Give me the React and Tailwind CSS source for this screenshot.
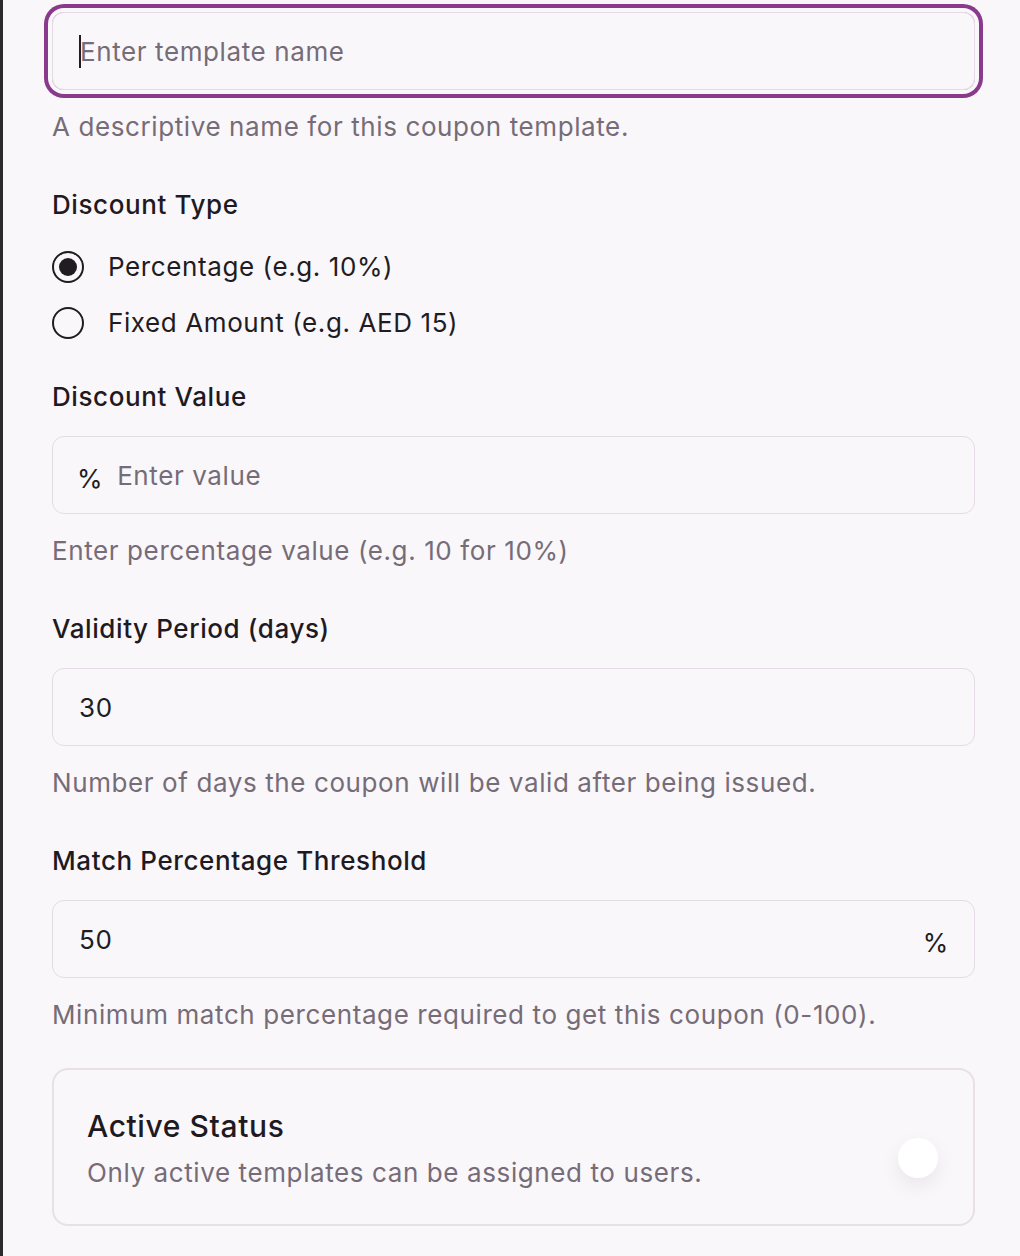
import React from "react";

const font = { fontFamily: "Inter, 'Noto Sans', sans-serif" };

const Helper = ({ children, className = "" }) => (
  <p className={`text-[26px] leading-[36px] text-[#766c78] ${className}`}>{children}</p>
);

const Label = ({ children, className = "" }) => (
  <p className={`text-[26px] leading-[36px] font-medium text-[#1f1a21] ${className}`}>{children}</p>
);

const Radio = ({ checked, label }) => (
  <div className="flex items-center h-[36px]">
    <span className="w-[32px] h-[32px] rounded-full border-2 border-[#211c22] flex items-center justify-center">
      {checked && <span className="w-[18px] h-[18px] rounded-full bg-[#211c22]" />}
    </span>
    <span className="ml-[24px] text-[26px] leading-[36px] text-[#211c22]">{label}</span>
  </div>
);

export default function App() {
  return (
    <div className="flex min-h-[1256px] bg-[#f9f7fa] tracking-[0.6px]" style={font}>
      {/* dark edge of the sidebar */}
      <div className="w-[3px] bg-[#2b2a2d] shrink-0" />

      <div className="flex-1 pl-[49px] pr-[45px] pt-[12px] pb-[30px]">
        {/* Template name (focused) */}
        <div className="h-[78px] rounded-[12px] border border-[#e5dbe6] ring-4 ring-[#8a3a8c] ring-offset-4 ring-offset-[#f9f7fa] flex items-center px-[26px]">
          <span className="w-[2px] h-[33px] bg-[#211c22] -mr-[1px]" />
          <span className="text-[26px] text-[#766c78]">Enter template name</span>
        </div>
        <Helper className="mt-[19px]">A descriptive name for this coupon template.</Helper>

        {/* Discount type */}
        <Label className="mt-[42px]">Discount Type</Label>
        <div className="mt-[26px] flex flex-col gap-[20px]">
          <Radio checked label="Percentage (e.g. 10%)" />
          <Radio label="Fixed Amount (e.g. AED 15)" />
        </div>

        {/* Discount value */}
        <Label className="mt-[38px]">Discount Value</Label>
        <div className="mt-[21px] h-[78px] rounded-[12px] border border-[#e5dbe6] flex items-center px-[24px]">
          <span className="text-[26px] text-[#211c22] mt-[6px]">%</span>
          <span className="ml-[14px] text-[26px] text-[#766c78]">Enter value</span>
        </div>
        <Helper className="mt-[19px]">Enter percentage value (e.g. 10 for 10%)</Helper>

        {/* Validity */}
        <Label className="mt-[42px]">Validity Period (days)</Label>
        <div className="mt-[21px] h-[78px] rounded-[12px] border border-[#e5dbe6] flex items-center px-[26px]">
          <span className="text-[26px] text-[#211c22]">30</span>
        </div>
        <Helper className="mt-[19px]">Number of days the coupon will be valid after being issued.</Helper>

        {/* Match threshold */}
        <Label className="mt-[42px]">Match Percentage Threshold</Label>
        <div className="mt-[21px] h-[78px] rounded-[12px] border border-[#e5dbe6] flex items-center justify-between pl-[26px] pr-[25px]">
          <span className="text-[26px] text-[#211c22]">50</span>
          <span className="text-[26px] text-[#211c22] mt-[6px]">%</span>
        </div>
        <Helper className="mt-[19px]">Minimum match percentage required to get this coupon (0-100).</Helper>

        {/* Active status */}
        <div className="mt-[35px] rounded-[16px] border-2 border-[#e8dfe8] flex items-center justify-between pl-[33px] pr-[35px] pt-[36px] pb-[33px]">
          <div>
            <p className="text-[30px] leading-[40px] font-medium text-[#1f1a21]">Active Status</p>
            <p className="mt-[9px] text-[26px] leading-[36px] text-[#766c78]">
              Only active templates can be assigned to users.
            </p>
          </div>
          <span className="w-[40px] h-[40px] rounded-full bg-white shadow-[0_8px_20px_rgba(0,0,0,0.07)] mt-[18px]" />
        </div>
      </div>
    </div>
  );
}
